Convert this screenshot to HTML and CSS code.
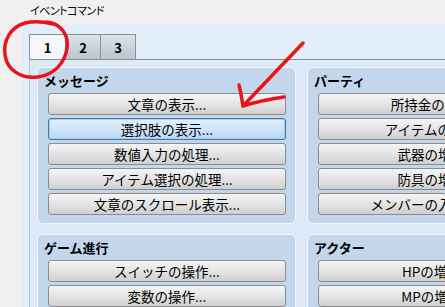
FILE: index.html
```html
<!DOCTYPE html>
<html lang="ja">
<head>
    <meta charset="UTF-8">
    <title>イベントコマンド</title>
    <link rel="stylesheet" href="styles.css">
</head>
<body>

<div class="titlebar">イベントコマンド</div>

<div class="main">
    <div class="tabs">
        <div class="tab active">1</div>
        <div class="tab">2</div>
        <div class="tab">3</div>
    </div>

    <div class="panel">
        <div class="group">
            <div class="group-title">メッセージ</div>
            <div class="btn">文章の表示...</div>
            <div class="btn selected">選択肢の表示...</div>
            <div class="btn">数値入力の処理...</div>
            <div class="btn">アイテム選択の処理...</div>
            <div class="btn">文章のスクロール表示...</div>
        </div>
        <div class="group">
            <div class="group-title">パーティ</div>
            <div class="btn">所持金の増減...</div>
            <div class="btn">アイテムの増減...</div>
            <div class="btn">武器の増減...</div>
            <div class="btn">防具の増減...</div>
            <div class="btn">メンバーの入れ替え...</div>
        </div>
        <div class="group">
            <div class="group-title">ゲーム進行</div>
            <div class="btn">スイッチの操作...</div>
            <div class="btn">変数の操作...</div>
            <div class="btn">セルフスイッチの操作...</div>
        </div>
        <div class="group">
            <div class="group-title">アクター</div>
            <div class="btn">HPの増減...</div>
            <div class="btn">MPの増減...</div>
            <div class="btn">ステートの変更...</div>
        </div>
    </div>
</div>

<!-- 赤ペンの書き込み -->
<svg class="marks" width="445" height="307" viewBox="0 0 445 307">
    <path d="M46 22 C60 23 69 34 67 48 C65 63 54 75 38 77 C21 79 7 70 5 55 C3 40 11 27 25 23 C33 21 41 21 53 24" />
    <path d="M303 43 L243 106" />
    <path d="M239 85 C241 93 242 100 243 106 C256 102 270 99 284 97" />
</svg>

</body>
</html>
```

FILE: styles.css
```css
body {
    margin: 0;
    width: 445px;
    height: 307px;
    overflow: hidden;
    position: relative;
    background: #f0f0f0;
    font-family: "Noto Sans CJK JP", "Noto Sans", sans-serif;
    color: #000;
}
.titlebar {
    height: 24px;
    line-height: 20px;
    padding-left: 30px;
    font-size: 11px;
    letter-spacing: -0.5px;
    font-feature-settings: "palt";
}
.main {
    margin-left: 22px;
    padding: 10px 0 0 7px;
    background: #e3eefb;
    height: 273px;
}
.tabs {
    display: flex;
    height: 25px;
}
.tab {
    width: 34px;
    height: 24px;
    border: 1px solid #8e8e8e;
    border-bottom: none;
    border-left: none;
    background: linear-gradient(#dde3ea, #b9c4cd);
    font-size: 13px;
    font-weight: bold;
    text-align: center;
    line-height: 25px;
}
.tab.active {
    width: 35px;
    border-left: 1px solid #8e8e8e;
    background: #f4f8fd;
}
.panel {
    border-top: 1px solid #8e8e8e;
    border-left: 1px solid #b4c4d6;
    padding: 7px 0 0 7px;
    display: grid;
    grid-template-columns: 259px 259px;
    column-gap: 11px;
    row-gap: 10px;
    background: #dde9f7;
}
.group {
    background: #c3d6eb;
    border: 1px solid #f2f7fd;
    border-radius: 6px;
    padding: 3px 9px 8px 10px;
}
.group-title {
    font-size: 13px;
    font-weight: bold;
    line-height: 20px;
    margin: 0 0 2px -4px;
}
.btn {
    height: 20px;
    line-height: 20px;
    margin-bottom: 3px;
    border: 1px solid #8c8c8c;
    border-radius: 3px;
    background: linear-gradient(#f5f5f5, #e4e4e4 50%, #cfcfcf);
    font-size: 13.5px;
    text-align: center;
    white-space: nowrap;
}
.btn:last-child {
    margin-bottom: 0;
}
.btn.selected {
    border-color: #3d7bad;
    background: linear-gradient(#e6f1fc, #cfe4f8 50%, #b9d7f3);
    box-shadow: inset 0 0 0 1px #a9cbe8;
}
.marks {
    position: absolute;
    left: 0;
    top: 0;
    pointer-events: none;
}
.marks path {
    fill: none;
    stroke: #e8141c;
    stroke-width: 3.5;
    stroke-linecap: round;
    stroke-linejoin: round;
}
```
